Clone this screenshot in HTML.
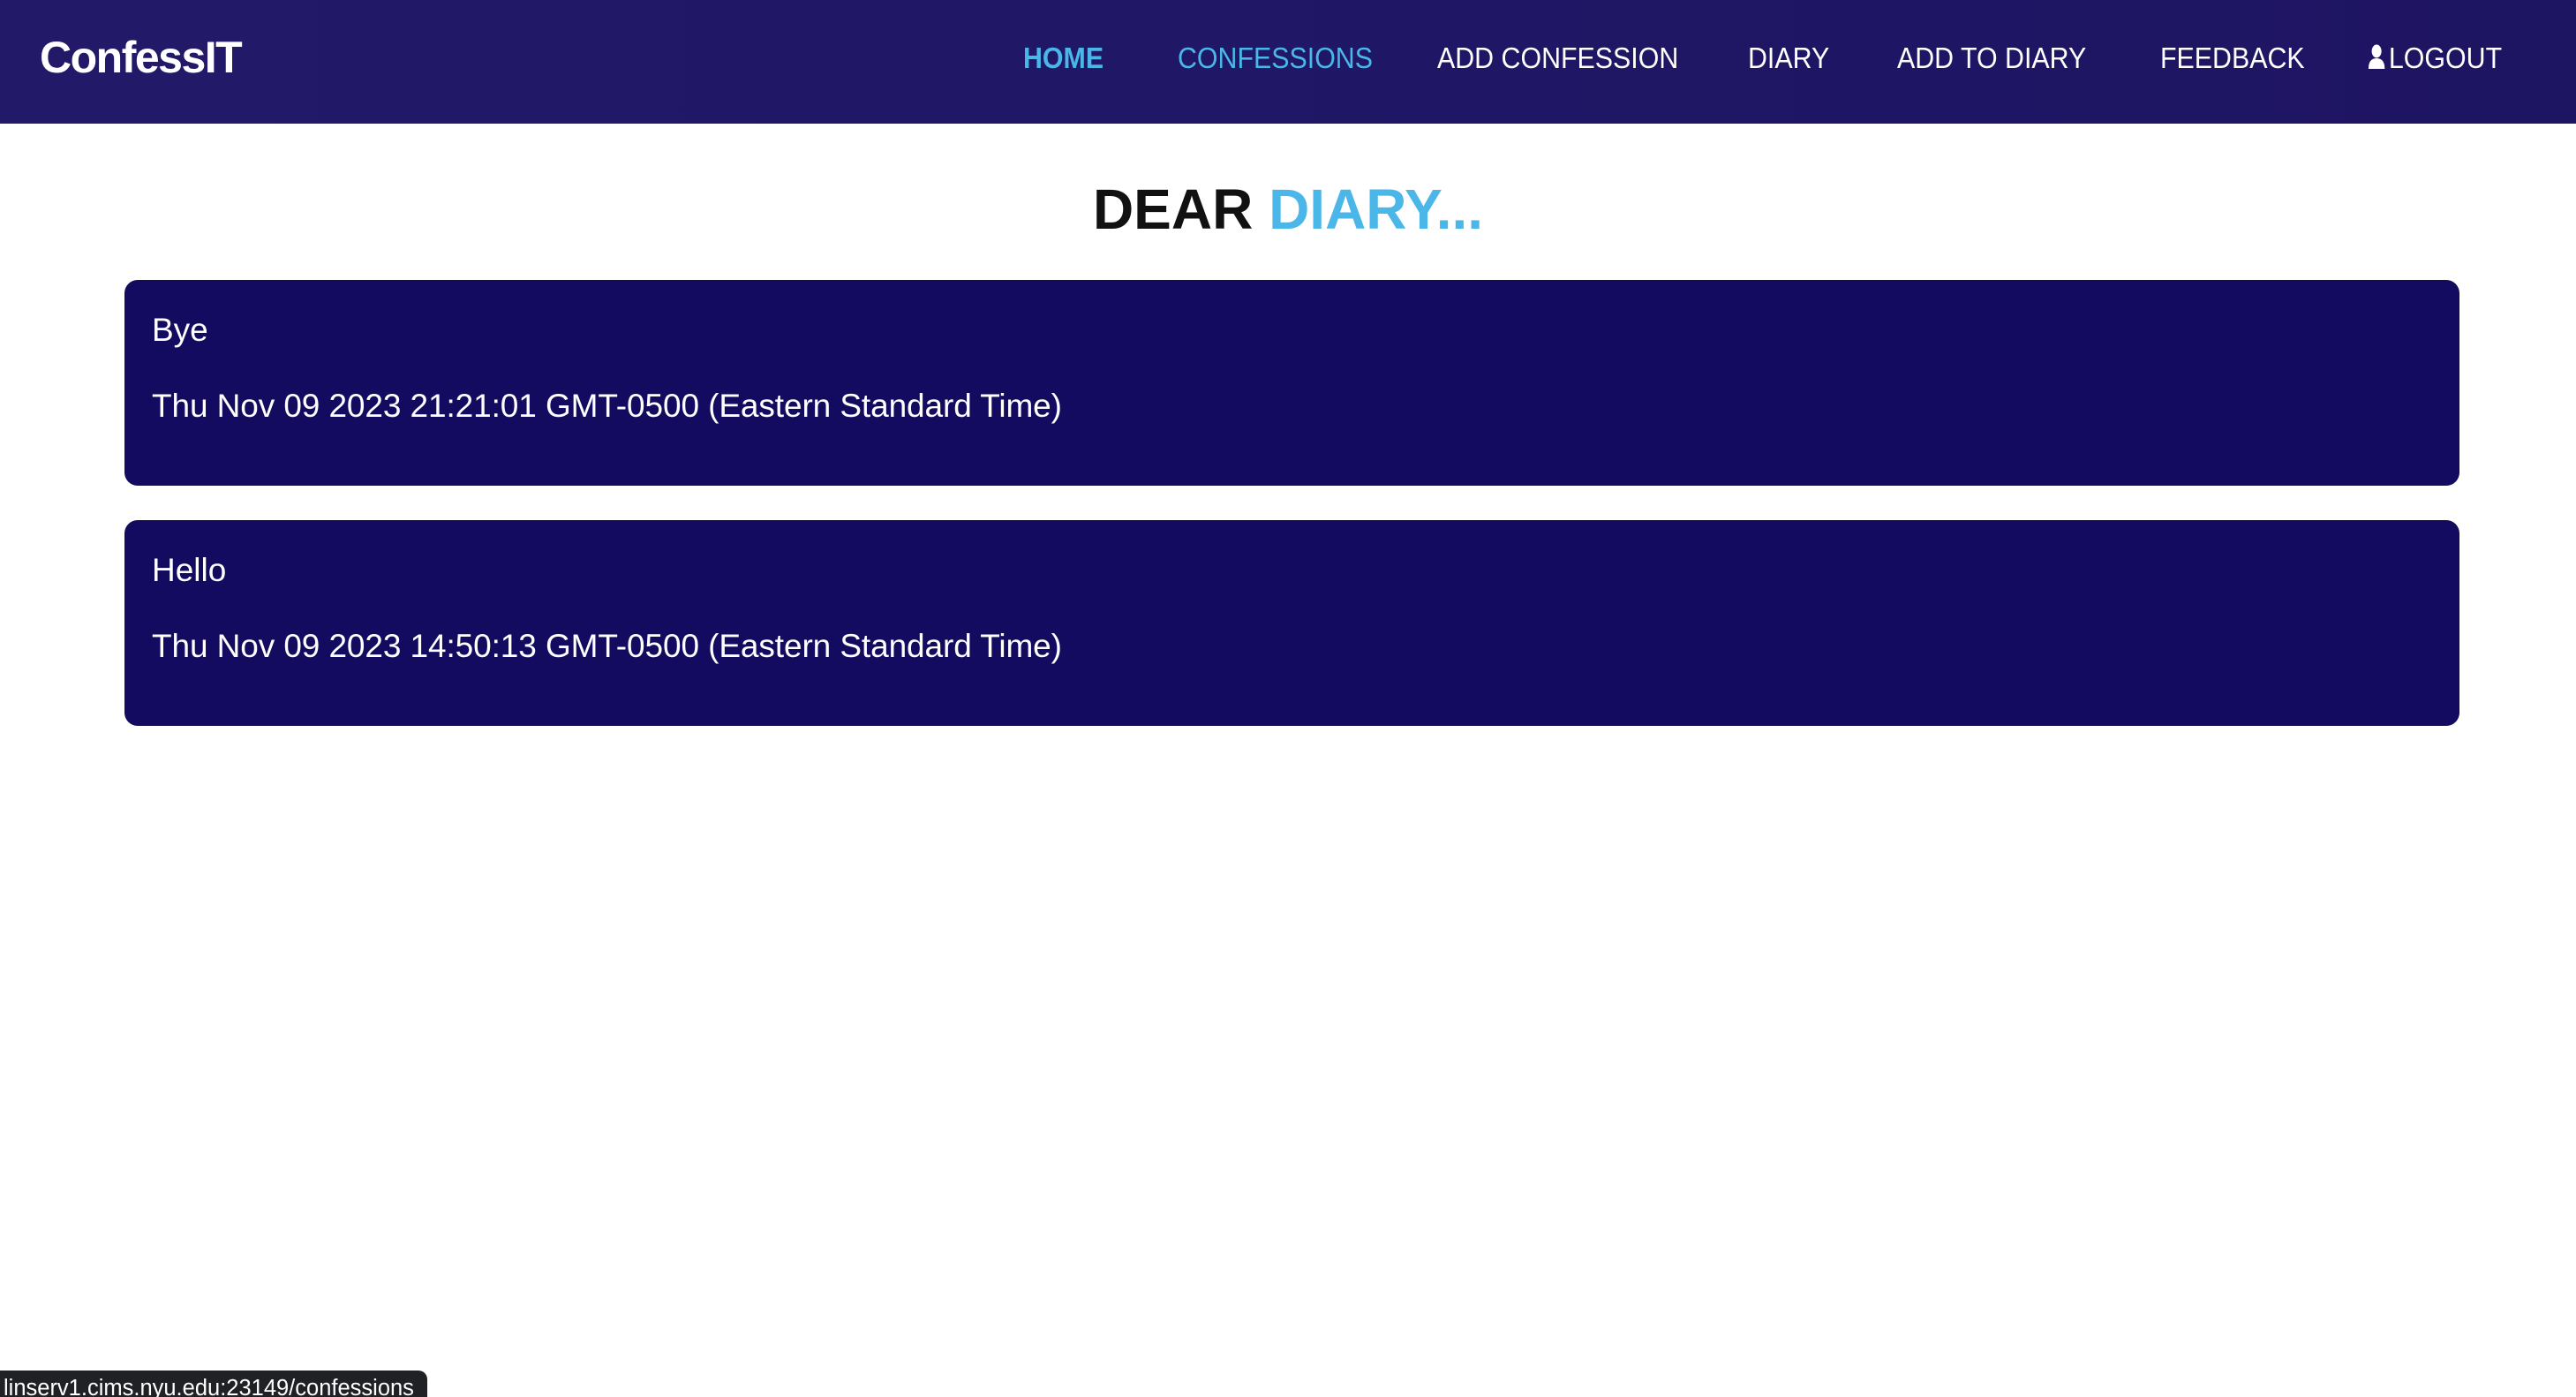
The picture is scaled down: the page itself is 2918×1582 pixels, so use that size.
<!DOCTYPE html>
<html><head><meta charset="utf-8">
<style>
html,body{margin:0;padding:0;width:2918px;height:1580px;overflow:hidden;background:#fff;font-family:"Liberation Sans","DejaVu Sans",sans-serif;}
.nav{position:absolute;left:0;top:0;width:2918px;height:140px;background:linear-gradient(90deg,#221a69,#1d1462);}
.logo{position:absolute;left:45px;top:36px;font-size:50px;font-weight:bold;color:#fff;letter-spacing:-1.5px;}
.nav a{position:absolute;top:47px;font-size:33px;color:#fff;text-decoration:none;white-space:nowrap;transform:scaleX(0.92);transform-origin:0 0;}
.nav a.act{color:#4bb6e8;}
h1{position:absolute;left:0;width:2918px;top:200px;margin:0;text-align:center;font-size:64px;font-weight:bold;color:#111;}
h1 span{color:#4bb6e8;}
.card{position:absolute;left:141px;width:2645px;height:233px;background:#130b5f;border-radius:15px;color:#fff;}
.card .t{position:absolute;left:31px;top:36px;font-size:37px;}
.card .d{position:absolute;left:31px;top:122px;font-size:37px;letter-spacing:-0.1px;}
.status{position:absolute;left:0;top:1552px;width:484px;height:30px;background:#202124;border-top-right-radius:10px;color:#fff;font-size:25.5px;line-height:40px;padding-left:4px;box-sizing:border-box;overflow:hidden;white-space:nowrap;}
</style></head><body>
<div class="nav">
<div class="logo">ConfessIT</div>
<a class="act" style="left:1159px;font-weight:bold">HOME</a>
<a class="act" style="left:1334px">CONFESSIONS</a>
<a style="left:1628px">ADD CONFESSION</a>
<a style="left:1980px">DIARY</a>
<a style="left:2149px">ADD TO DIARY</a>
<a style="left:2447px">FEEDBACK</a>
<a style="left:2682px"><svg width="22" height="30" viewBox="0 0 22 30" style="vertical-align:-3px;margin-right:4px"><ellipse cx="11" cy="8" rx="6" ry="7.5" fill="#fff"/><path d="M1 28 Q1 16 11 16 Q21 16 21 28 Z" fill="#fff"/></svg>LOGOUT</a>
</div>
<h1>DEAR <span>DIARY...</span></h1>
<div class="card" style="top:317px"><div class="t">Bye</div><div class="d">Thu Nov 09 2023 21:21:01 GMT-0500 (Eastern Standard Time)</div></div>
<div class="card" style="top:589px"><div class="t">Hello</div><div class="d">Thu Nov 09 2023 14:50:13 GMT-0500 (Eastern Standard Time)</div></div>
<div class="status">linserv1.cims.nyu.edu:23149/confessions</div>
</body></html>
